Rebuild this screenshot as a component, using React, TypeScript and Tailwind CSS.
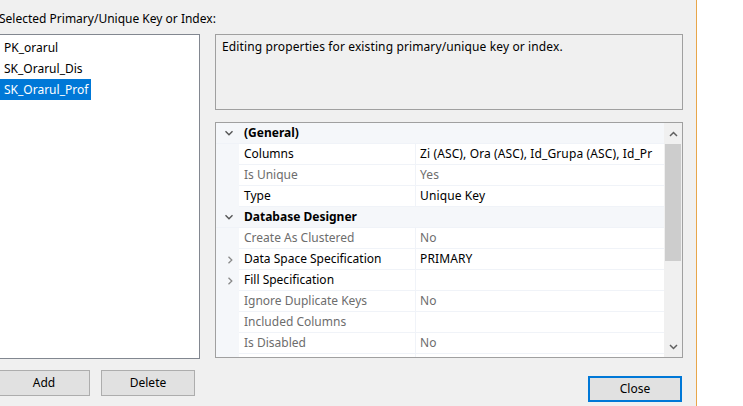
import React from "react";

const ChevDown = () => (
  <svg width="10" height="10" viewBox="0 0 10 10" className="block">
    <path d="M1.5 3.2 L5 6.7 L8.5 3.2" fill="none" stroke="#555" strokeWidth="1.4" />
  </svg>
);
const ChevRight = () => (
  <svg width="10" height="10" viewBox="0 0 10 10" className="block">
    <path d="M3.5 1.8 L6.8 5 L3.5 8.2" fill="none" stroke="#8a8a8a" strokeWidth="1.3" />
  </svg>
);

type Row =
  | { kind: "cat"; name: string }
  | { kind: "prop"; name: string; value: string; gray?: boolean; expand?: boolean };

const rows: Row[] = [
  { kind: "cat", name: "(General)" },
  { kind: "prop", name: "Columns", value: "Zi (ASC), Ora (ASC), Id_Grupa (ASC), Id_Pr" },
  { kind: "prop", name: "Is Unique", value: "Yes", gray: true },
  { kind: "prop", name: "Type", value: "Unique Key" },
  { kind: "cat", name: "Database Designer" },
  { kind: "prop", name: "Create As Clustered", value: "No", gray: true },
  { kind: "prop", name: "Data Space Specification", value: "PRIMARY", expand: true },
  { kind: "prop", name: "Fill Specification", value: "", expand: true },
  { kind: "prop", name: "Ignore Duplicate Keys", value: "No", gray: true },
  { kind: "prop", name: "Included Columns", value: "", gray: true },
  { kind: "prop", name: "Is Disabled", value: "No", gray: true },
  { kind: "prop", name: "", value: "", gray: true },
];

export default function App() {
  return (
    <div
      className="flex w-[743px] h-[406px] overflow-hidden text-[12px] text-black"
      style={{ fontFamily: '"Noto Sans", "Segoe UI", sans-serif' }}
    >
      <div className="w-[696px] h-full bg-[#f0f0f0] flex flex-col shrink-0">
        <div className="mt-[11px] ml-[-1px] h-[16px] leading-[16px] whitespace-nowrap">
          Selected Primary/Unique Key or Index:
        </div>
        <div className="mt-[7px] flex">
          {/* list box */}
          <div className="ml-[-1px] w-[201px] h-[325px] bg-white border border-[#828790] flex flex-col pt-[2px]">
            <div className="h-[21px] leading-[21px] pl-[4px]">PK_orarul</div>
            <div className="h-[21px] leading-[21px] pl-[4px]">SK_Orarul_Dis</div>
            <div className="h-[21px] leading-[21px] pl-[4px] pr-[3px] bg-[#0078d7] text-white self-start">
              SK_Orarul_Prof
            </div>
          </div>
          {/* right column */}
          <div className="ml-[15px] w-[468px] flex flex-col">
            <div className="h-[76px] border border-[#a0a0a0] bg-[#f0f0f0] px-[6px] pt-[4px] leading-[16px] whitespace-nowrap tracking-[0.12px]">
              Editing properties for existing primary/unique key or index.
            </div>
            <div className="mt-[12px] h-[236px] border border-[#a0a0a0] bg-white flex overflow-hidden">
              <div className="flex-1 flex flex-col overflow-hidden">
                {rows.map((r, i) =>
                  r.kind === "cat" ? (
                    <div key={i} className="h-[21px] shrink-0 flex items-center bg-[#f5f7fa] border-b border-[#f0f3f8]">
                      <div className="w-[23px] flex justify-center pl-[2px]">
                        <ChevDown />
                      </div>
                      <div className="pl-[5px] font-bold whitespace-nowrap">{r.name}</div>
                    </div>
                  ) : (
                    <div key={i} className="h-[21px] shrink-0 flex">
                      <div className="w-[23px] bg-[#f5f7fa] flex items-center justify-center pl-[4px]">
                        {r.expand ? <ChevRight /> : null}
                      </div>
                      <div
                        className={
                          "w-[177px] shrink-0 border-r border-b border-[#f0f3f8] flex items-center pl-[5px] whitespace-nowrap " +
                          (r.gray ? "text-[#6d6d6d]" : "text-black")
                        }
                      >
                        {r.name}
                      </div>
                      <div
                        className={
                          "flex-1 border-b border-[#f0f3f8] flex items-center pl-[4px] whitespace-nowrap overflow-hidden tracking-[0.12px] " +
                          (r.gray ? "text-[#6d6d6d]" : "text-black")
                        }
                      >
                        {r.value}
                      </div>
                    </div>
                  )
                )}
              </div>
              {/* scrollbar */}
              <div className="w-[18px] shrink-0 bg-[#f0f0f0] flex flex-col">
                <div className="h-[21px] flex items-center justify-center">
                  <svg width="9" height="6" viewBox="0 0 9 6">
                    <path d="M1 5 L4.5 1.5 L8 5" fill="none" stroke="#606060" strokeWidth="1.5" />
                  </svg>
                </div>
                <div className="mx-[1px] h-[117px] bg-[#cdcdcd]" />
                <div className="flex-1" />
                <div className="h-[20px] flex items-center justify-center">
                  <svg width="9" height="6" viewBox="0 0 9 6">
                    <path d="M1 1 L4.5 4.5 L8 1" fill="none" stroke="#606060" strokeWidth="1.5" />
                  </svg>
                </div>
              </div>
            </div>
          </div>
        </div>
        {/* buttons */}
        <div className="flex items-start">
          <div className="ml-[-2px] mt-[11px] w-[92px] h-[26px] bg-[#e1e1e1] border border-[#adadad] flex items-center justify-center">
            Add
          </div>
          <div className="ml-[11px] mt-[11px] w-[94px] h-[26px] bg-[#e1e1e1] border border-[#adadad] flex items-center justify-center">
            Delete
          </div>
          <div className="ml-[393px] mt-[17px] w-[94px] h-[26px] bg-[#e1e1e1] border-2 border-[#0078d7] flex items-center justify-center">
            Close
          </div>
        </div>
      </div>
      <div className="w-[1px] h-full bg-[#e8a64a] shrink-0" />
      <div className="flex-1 h-full bg-white" />
    </div>
  );
}
